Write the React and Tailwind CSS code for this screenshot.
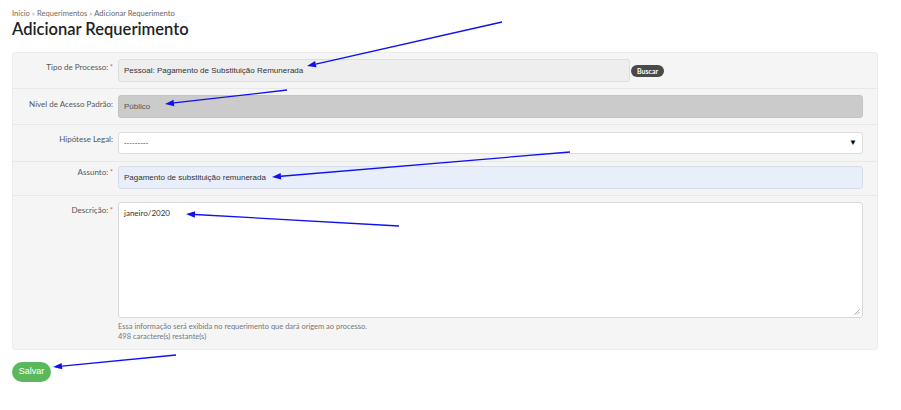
import React from "react";

const Label = ({ text, required, top }) => (
  <div className={`w-[100px] shrink-0 text-right text-[8px] leading-[10px] text-[#555] ${top}`}>
    {text}
    {required && <span className="text-[#d9534f] align-top text-[7px]"> *</span>}
  </div>
);

const Arrow = ({ x1, y1, x2, y2 }) => {
  const a = Math.atan2(y2 - y1, x2 - x1);
  const len = 9;
  const w = 3.2;
  const bx = x2 - Math.cos(a) * len;
  const by = y2 - Math.sin(a) * len;
  const px = -Math.sin(a) * w;
  const py = Math.cos(a) * w;
  return (
    <g>
      <line x1={x1} y1={y1} x2={bx} y2={by} stroke="#1010f0" strokeWidth="1.3" />
      <polygon
        points={`${x2},${y2} ${bx + px},${by + py} ${bx - px},${by - py}`}
        fill="#1010f0"
      />
    </g>
  );
};

export default function App() {
  return (
    <div className="relative w-[901px] h-[410px] bg-white font-['Lato',sans-serif] text-[#333] px-[12px] pt-[9px]">
      {/* breadcrumb */}
      <div className="text-[7.6px] leading-[9px] text-[#7a6a5a]">
        Início <span className="text-[#aaa]">»</span> Requerimentos{" "}
        <span className="text-[#aaa]">»</span> <span className="text-[#666]">Adicionar Requerimento</span>
      </div>
      <h1 className="text-[16.5px] leading-[22px] font-semibold text-[#222]">
        Adicionar Requerimento
      </h1>

      {/* form panel */}
      <div className="mt-[12px] w-[866px] bg-[#f5f5f5] border border-[#ececec] rounded-[3px]">
        <div className="flex h-[36px] border-b border-[#e8e8e8] pt-[6px]">
          <Label text="Tipo de Processo:" required top="mt-[3px]" />
          <div className="ml-[5px] flex items-start">
            <div className="w-[512px] h-[23px] bg-[#eeeeee] border border-[#dddddd] rounded-[3px] flex items-center px-[5px] text-[8px] text-[#333] font-['Liberation_Sans',sans-serif]">
              Pessoal: Pagamento de Substituição Remunerada
            </div>
            <button className="mt-[6px] ml-[1px] h-[12px] px-[6px] rounded-full bg-[#4a4a4a] text-white text-[7px] leading-[12px] font-bold">
              Buscar
            </button>
          </div>
        </div>

        <div className="flex h-[36px] border-b border-[#e8e8e8] pt-[6px]">
          <Label text="Nível de Acesso Padrão:" top="mt-[4px]" />
          <div className="ml-[5px] w-[745px] h-[23px] bg-[#cbcbcb] border border-[#c4c4c4] rounded-[3px] flex items-center px-[5px] text-[8px] text-[#555] font-['Liberation_Sans',sans-serif]">
            Público
          </div>
        </div>

        <div className="flex h-[37px] border-b border-[#e8e8e8] pt-[7px]">
          <Label text="Hipótese Legal:" top="mt-[2px]" />
          <div className="ml-[5px] w-[745px] h-[22px] bg-white border border-[#dddddd] rounded-[3px] flex items-center justify-between px-[5px] text-[8px] text-[#333] font-['Liberation_Sans',sans-serif]">
            <span className="text-[7px] tracking-[0.4px]">---------</span>
            <span className="text-[8px] text-black">▼</span>
          </div>
        </div>

        <div className="flex h-[34px] border-b border-[#e8e8e8] pt-[4px]">
          <Label text="Assunto:" required top="mt-[1px]" />
          <div className="ml-[5px] w-[745px] h-[23px] bg-[#e8effa] border border-[#d6dde8] rounded-[3px] flex items-center px-[5px] text-[8px] text-[#333] font-['Liberation_Sans',sans-serif]">
            Pagamento de substituição remunerada
          </div>
        </div>

        <div className="flex h-[153px] pt-[6px]">
          <Label text="Descrição:" required top="mt-[3px]" />
          <div className="ml-[5px] flex flex-col">
            <div className="relative w-[745px] h-[116px] bg-white border border-[#d8d8d8] rounded-[3px] px-[5px] pt-[5px] text-[8px] leading-[10px] text-[#333]">
              janeiro/2020
              <svg className="absolute right-[2px] bottom-[2px]" width="6" height="6" viewBox="0 0 6 6">
                <path d="M5.5 0.5 L0.5 5.5 M5.5 3 L3 5.5" stroke="#999" strokeWidth="0.8" />
              </svg>
            </div>
            <div className="mt-[3px] text-[7.5px] leading-[11px] text-[#777]">
              Essa informação será exibida no requerimento que dará origem ao processo.
            </div>
            <div className="text-[7.5px] leading-[10px] text-[#777]">498 caractere(s) restante(s)</div>
          </div>
        </div>
      </div>

      <button className="mt-[12px] h-[20px] w-[39px] rounded-full bg-[#5cb85c] text-white text-[9px] font-['Liberation_Sans',sans-serif]">
        Salvar
      </button>

      {/* annotation arrows */}
      <svg className="absolute inset-0 pointer-events-none" width="901" height="410">
        <Arrow x1={502} y1={22} x2={307} y2={66} />
        <Arrow x1={287} y1={90} x2={165} y2={104} />
        <Arrow x1={570} y1={152} x2={272} y2={177} />
        <Arrow x1={399} y1={226} x2={186} y2={214} />
        <Arrow x1={176} y1={355} x2={53} y2={367} />
      </svg>
    </div>
  );
}
